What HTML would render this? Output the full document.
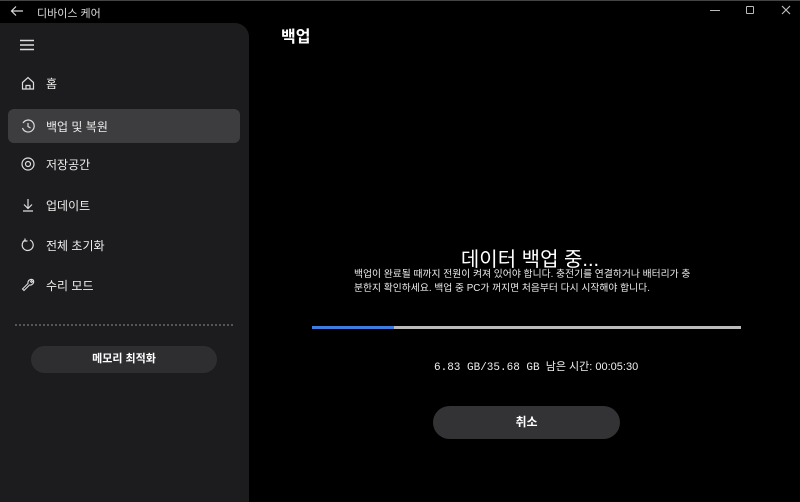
<!DOCTYPE html><html><head><meta charset="utf-8"><style>
*{margin:0;padding:0;box-sizing:border-box}
body{width:800px;height:501px;background:#000;color:#fff;font-family:"Liberation Sans","Noto Sans CJK KR",sans-serif;position:relative;overflow:hidden;border-top:1px solid #444}
.a{position:absolute}
.side{left:0;top:22px;width:249px;height:479px;background:#1c1c1e;border-top-right-radius:14px}
.item{position:absolute;left:8px;width:232px;height:34px;font-size:12px;display:flex;align-items:center;padding-left:38px;color:#eee}
.item svg{position:absolute;left:13px;top:10px}
.sel{background:#3d3d40;border-radius:6px}
</style></head><body>
<svg class="a" style="left:10px;top:4px" width="14" height="12" viewBox="0 0 14 12"><path d="M13 6H2M6 1.5L1.5 6 6 10.5" stroke="#ddd" stroke-width="1.2" fill="none"/></svg>
<div class="a" style="left:37px;top:4px;font-size:11px;color:#ddd">디바이스 케어</div>
<div class="a" style="left:710px;top:9px;width:10px;height:1px;background:#bbb"></div>
<div class="a" style="left:746px;top:5px;width:8px;height:8px;border:1.2px solid #bbb;border-radius:1px"></div>
<svg class="a" style="left:781px;top:4px" width="10" height="10"><path d="M1 1L9 9M9 1L1 9" stroke="#bbb" stroke-width="1.2"/></svg>
<div class="a side">
<svg class="a" style="left:20px;top:16px" width="14" height="12"><path d="M0 1.5H14M0 6H14M0 10.5H14" stroke="#ddd" stroke-width="1.4"/></svg>
</div>
<div class="item" style="top:65px"><svg width="14" height="14" viewBox="0 0 14 14"><path d="M1.5 6.5L7 1.5 12.5 6.5V13H1.5Z M5 13V9.5H9V13" stroke="#ddd" stroke-width="1.2" fill="none"/></svg>홈</div>
<div class="item sel" style="top:108px"><svg width="14" height="14" viewBox="0 0 14 14"><path d="M2 4A6 6 0 1 1 1.5 9" stroke="#ddd" stroke-width="1.2" fill="none"/><path d="M7 4V7.5L9.5 9" stroke="#ddd" stroke-width="1.2" fill="none"/></svg>백업 및 복원</div>
<div class="item" style="top:146px"><svg width="14" height="14" viewBox="0 0 14 14"><circle cx="7" cy="7" r="6" stroke="#ddd" stroke-width="1.2" fill="none"/><circle cx="7" cy="7" r="2.5" stroke="#ddd" stroke-width="1.2" fill="none"/></svg>저장공간</div>
<div class="item" style="top:187px"><svg width="14" height="14" viewBox="0 0 14 14"><path d="M7 1V10M3 6.5L7 10.5 11 6.5M2 13H12" stroke="#ddd" stroke-width="1.2" fill="none"/></svg>업데이트</div>
<div class="item" style="top:227px"><svg width="14" height="14" viewBox="0 0 14 14"><path d="M9 2A5.5 5.5 0 1 1 4 2.2M4 0.5V3H6.5" stroke="#ddd" stroke-width="1.2" fill="none"/></svg>전체 초기화</div>
<div class="item" style="top:267px"><svg width="14" height="14" viewBox="0 0 14 14"><path d="M1.5 11L7 5.5A3.5 3.5 0 0 1 11.5 1.5L9.5 3.5 10.5 4.5 12.5 2.5A3.5 3.5 0 0 1 8.5 7L3 12.5Z" stroke="#ddd" stroke-width="1.1" fill="none"/></svg>수리 모드</div>
<div class="a" style="left:15px;top:323px;width:218px;border-top:2px dotted #555"></div>
<div class="a" style="left:31px;top:345px;width:186px;height:27px;background:#2e2e30;border-radius:14px;font-size:11px;font-weight:bold;text-align:center;line-height:27px">메모리 최적화</div>
<div class="a" style="left:281px;top:22px;font-size:16px;font-weight:bold">백업</div>
<div class="a" style="left:300px;top:242px;width:460px;text-align:center;font-size:20px">데이터 백업 중...</div>
<div class="a" style="left:354px;top:267px;width:400px;font-size:9.8px;line-height:14px;color:#eee;white-space:nowrap">백업이 완료될 때까지 전원이 켜져 있어야 합니다. 충전기를 연결하거나 배터리가 충<br>분한지 확인하세요. 백업 중 PC가 꺼지면 처음부터 다시 시작해야 합니다.</div>
<div class="a" style="left:312px;top:325px;width:429px;height:3px;background:#bbb"></div>
<div class="a" style="left:312px;top:325px;width:82px;height:3px;background:#3d7de0"></div>
<div class="a" style="left:434px;top:357px;font-size:11px;color:#eee;white-space:nowrap"><span style="font-family:'Liberation Mono',monospace">6.83 GB/35.68 GB</span>&nbsp; 남은 시간: 00:05:30</div>
<div class="a" style="left:433px;top:405px;width:187px;height:33px;background:#333335;border-radius:17px;font-size:12px;font-weight:bold;text-align:center;line-height:33px">취소</div>
</body></html>
